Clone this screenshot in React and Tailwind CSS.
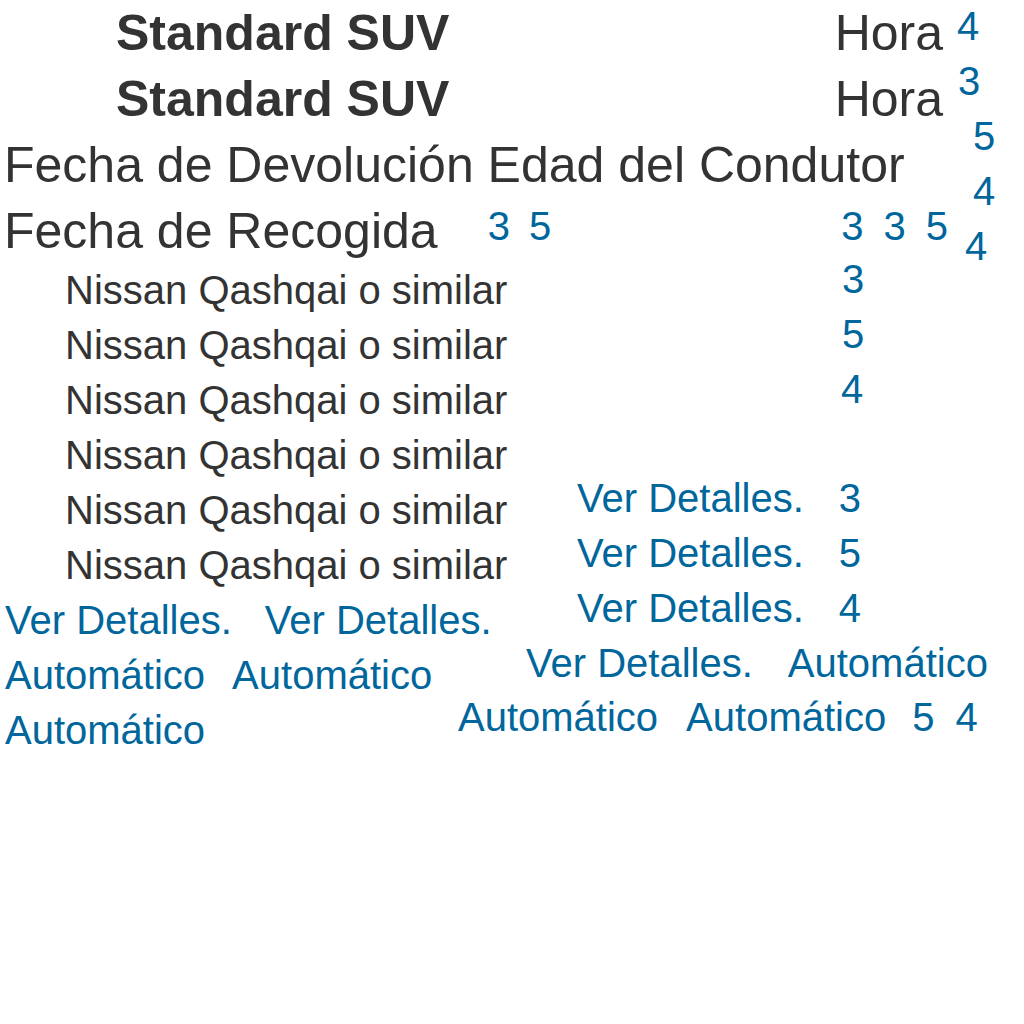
import React from 'react';

const models = Array.from({ length: 6 }, (_, i) => i);

export default function App() {
  return (
    <div
      className="w-[1024px] h-[1024px] bg-white overflow-hidden flex flex-col"
      style={{ fontFamily: '"Liberation Sans", Arial, sans-serif' }}
    >
      {/* top: vehicle + dates */}
      <div className="flex h-[263px] shrink-0">
        <div className="w-[955px] shrink-0 flex flex-col text-[50px] leading-[66px] text-[#333333] whitespace-nowrap">
          <div className="flex items-baseline w-[943px] h-[66px]">
            <span className="pl-[116px] font-bold">Standard SUV</span>
            <span className="ml-auto">Hora</span>
          </div>
          <div className="flex items-baseline w-[943px] h-[66px]">
            <span className="pl-[116px] font-bold">Standard SUV</span>
            <span className="ml-auto">Hora</span>
          </div>
          <div className="h-[66px] pl-[4px]">Fecha de Devolución Edad del Condutor</div>
          <div className="flex items-start h-[66px]">
            <span className="pl-[4px]">Fecha de Recogida</span>
            <div className="flex gap-x-[19px] ml-[50px] mt-[8px] text-[40px] leading-none text-[#00669c]">
              <span>3</span>
              <span>5</span>
            </div>
            <div className="flex gap-x-[20px] ml-[290px] mt-[8px] text-[40px] leading-none text-[#00669c]">
              <span>3</span>
              <span>3</span>
              <span>5</span>
            </div>
          </div>
        </div>
        <div className="flex flex-col -mt-[1px] text-[40px] leading-[55px] text-[#00669c] whitespace-nowrap">
          <span className="pl-[2px]">4</span>
          <span className="pl-[3px]">3</span>
          <span className="pl-[18px]">5</span>
          <span className="pl-[18px]">4</span>
          <span className="pl-[10px]">4</span>
        </div>
      </div>

      {/* results */}
      <div className="flex text-[40px] whitespace-nowrap">
        <div className="w-[455px] shrink-0 flex flex-col leading-[55px]">
          <div className="flex flex-col pl-[65px] text-[#333333]">
            {models.map((i) => (
              <span key={i}>Nissan Qashqai o similar</span>
            ))}
          </div>
          <div className="flex flex-wrap w-[532px] pl-[5px] text-[#00669c]">
            <span className="mr-[33px]">Ver Detalles.</span>
            <span className="mr-[33px]">Ver Detalles.</span>
            <span className="mr-[27px]">Automático</span>
            <span className="mr-[27px]">Automático</span>
            <span className="mr-[27px]">Automático</span>
          </div>
        </div>

        <div className="flex flex-col -mt-[11px] leading-[54.8px] text-[#00669c]">
          <span className="pl-[387px]">3</span>
          <span className="pl-[387px]">5</span>
          <span className="pl-[386px]">4</span>
          <span className="h-[54.8px]" />
          <div className="flex gap-x-[35px] pl-[122px]">
            <span>Ver Detalles.</span>
            <span>3</span>
          </div>
          <div className="flex gap-x-[35px] pl-[122px]">
            <span>Ver Detalles.</span>
            <span>5</span>
          </div>
          <div className="flex gap-x-[35px] pl-[122px]">
            <span>Ver Detalles.</span>
            <span>4</span>
          </div>
          <div className="flex gap-x-[35px] pl-[71px]">
            <span>Ver Detalles.</span>
            <span>Automático</span>
          </div>
          <div className="flex pl-[3px]">
            <span className="mr-[28px]">Automático</span>
            <span className="mr-[26px]">Automático</span>
            <span className="mr-[21px]">5</span>
            <span>4</span>
          </div>
        </div>
      </div>
    </div>
  );
}
